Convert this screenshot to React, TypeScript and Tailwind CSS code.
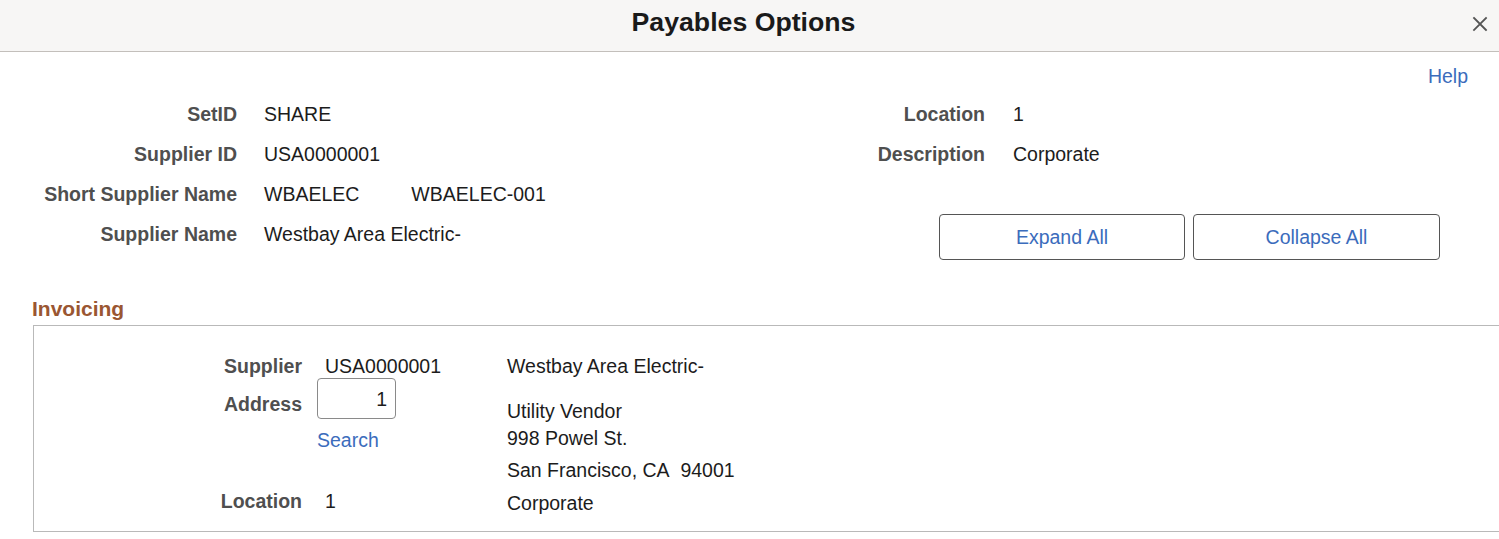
import React from "react";

const label = "text-right font-bold text-[#4f4f4f]";
const value = "text-[#1c1c1c]";

function CloseIcon() {
  return (
    <svg width="16" height="16" viewBox="0 0 16 16" fill="none">
      <path d="M2 2 L14 14 M14 2 L2 14" stroke="#555" strokeWidth="1.8" strokeLinecap="square" />
    </svg>
  );
}

export default function App() {
  return (
    <div
      className="w-[1499px] h-[539px] overflow-hidden bg-white text-[19.5px] leading-6"
      style={{ fontFamily: '"Liberation Sans", Arial, sans-serif' }}
    >
      {/* dialog header */}
      <div className="relative flex h-[52px] items-start justify-center border-b border-[#c3bfbb] bg-[#f7f6f5] pt-[6px] pr-[12px]">
        <h1 className="text-[26.7px] leading-8 font-bold text-[#1a1a1a]">Payables Options</h1>
        <button className="absolute right-[11px] top-[16px]">
          <CloseIcon />
        </button>
      </div>

      <div className="flex justify-end pr-[31px] pt-3">
        <a className="text-[#3b6cbc]">Help</a>
      </div>

      {/* header fields */}
      <div className="mt-[6px] flex">
        <div className="grid w-[800px] grid-cols-[237px_1fr] auto-rows-[40px] items-center gap-x-[27px] content-start">
          <div className={label}>SetID</div>
          <div className={value}>SHARE</div>
          <div className={label}>Supplier ID</div>
          <div className={value}>USA0000001</div>
          <div className={label}>Short Supplier Name</div>
          <div className={`flex gap-[52px] ${value}`}>
            <span>WBAELEC</span>
            <span>WBAELEC-001</span>
          </div>
          <div className={label}>Supplier Name</div>
          <div className={value}>Westbay Area Electric-</div>
        </div>
        <div className="flex flex-1 flex-col">
          <div className="grid grid-cols-[185px_1fr] auto-rows-[40px] items-center gap-x-[28px]">
            <div className={label}>Location</div>
            <div className={value}>1</div>
            <div className={label}>Description</div>
            <div className={value}>Corporate</div>
            <div />
            <div />
          </div>
          <div className="flex justify-end gap-2 pr-[59px]">
            <button className="h-[46px] w-[246px] rounded-[4px] border border-[#555] text-[#3b6cbc]">Expand All</button>
            <button className="h-[46px] w-[247px] rounded-[4px] border border-[#555] text-[#3b6cbc]">Collapse All</button>
          </div>
        </div>
      </div>

      {/* Invoicing */}
      <h2 className="mt-[37px] pl-[32px] text-[21px] font-bold text-[#9a5632]">Invoicing</h2>
      <div className="ml-[33px] mt-[4px] flex border border-r-0 border-[#b9b9b9] pt-[28px] pb-[16px]">
        <div className="flex w-[268px] flex-col">
          <div className={label}>Supplier</div>
          <div className={`mt-[14px] ${label}`}>Address</div>
          <div className={`mt-[73px] ${label}`}>Location</div>
        </div>
        <div className="ml-[15px] flex w-[190px] flex-col items-start">
          <div className={`pl-2 ${value}`}>USA0000001</div>
          <div className="flex h-[41px] w-[79px] items-center justify-end rounded-[4px] border border-[#8a8a8a] pr-[8px] text-[#1c1c1c]">
            1
          </div>
          <a className="mt-[9px] text-[#3b6cbc]">Search</a>
          <div className={`mt-[37px] pl-2 ${value}`}>1</div>
        </div>
        <div className={`flex flex-col ${value}`}>
          <div>Westbay Area Electric-</div>
          <div className="mt-[21px]">Utility Vendor</div>
          <div className="mt-[3px]">998 Powel St.</div>
          <div className="mt-[8px]">San Francisco, CA&nbsp; 94001</div>
          <div className="mt-[9px]">Corporate</div>
        </div>
      </div>
    </div>
  );
}
